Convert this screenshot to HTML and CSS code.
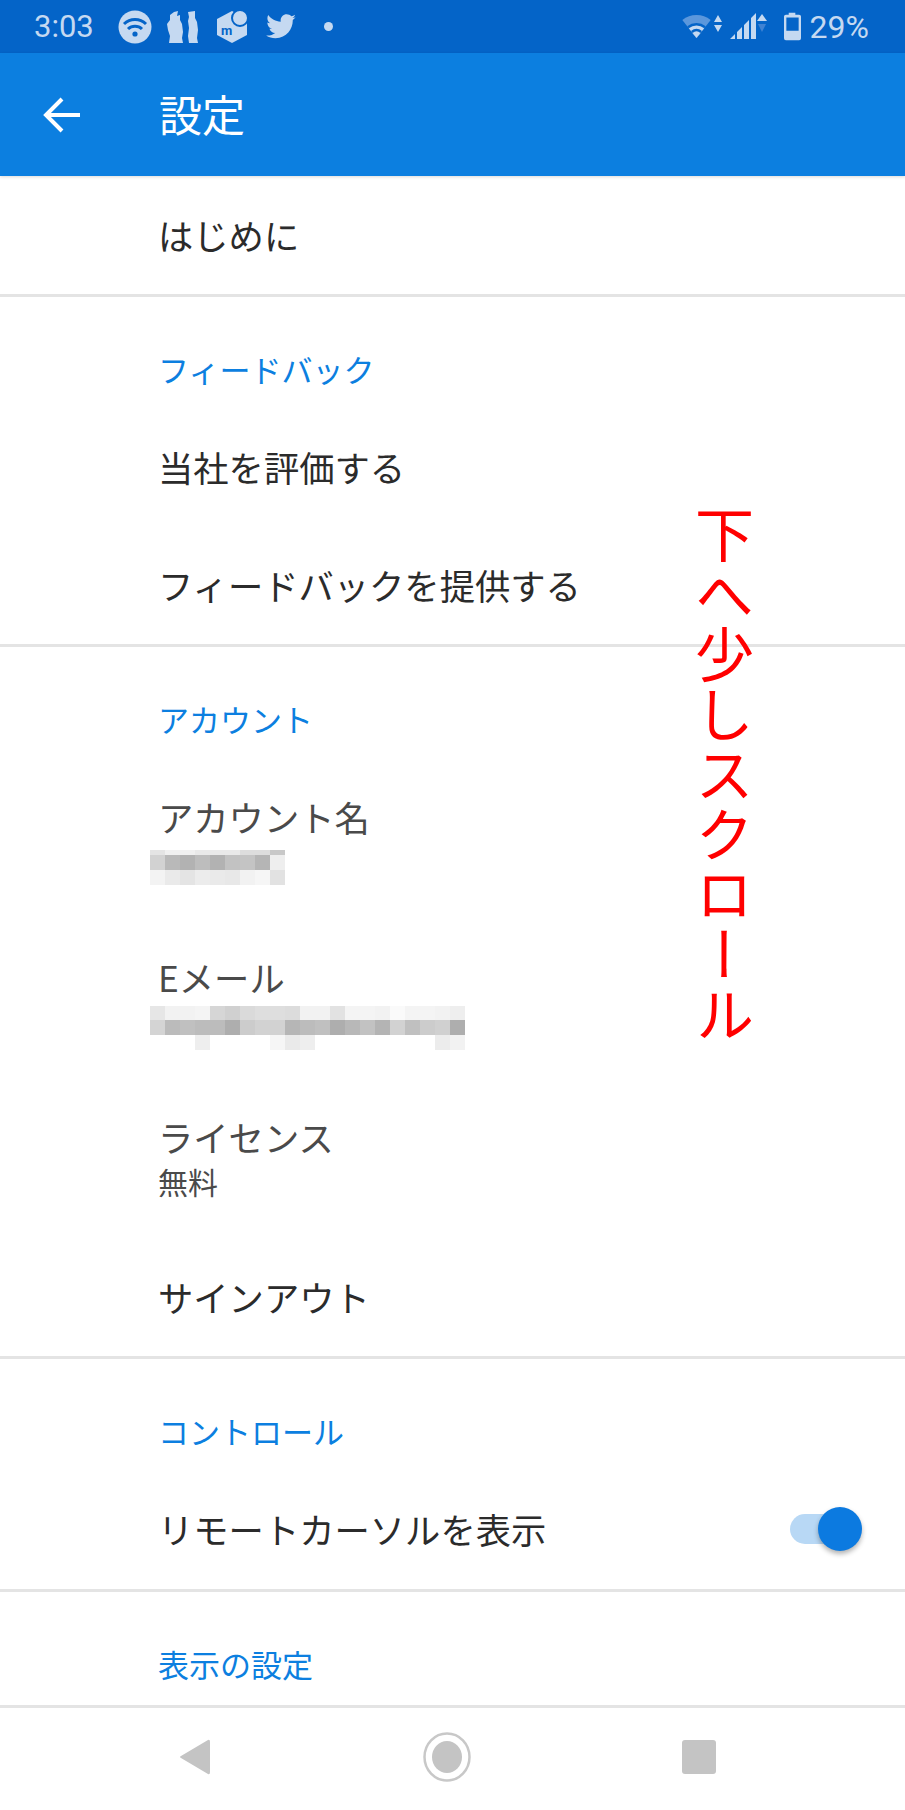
FILE: index.html
```html
<!DOCTYPE html>
<html lang="ja">
<head>
  <meta charset="UTF-8">
  <meta name="viewport" content="width=device-width, initial-scale=1.0">
  <title>設定</title>
  <link rel="stylesheet" href="styles.css">
</head>
<body>
  <div class="phone">
    <div class="status-bar">
      <span class="clock">3:03</span>
      <div class="notif-icons">
        <svg width="34" height="34" viewBox="0 0 34 34">
          <circle cx="17" cy="17" r="16.5" fill="#c5d9f1"/>
          <path d="M6 14 A16 16 0 0 1 28 14 M10 19 A10 10 0 0 1 24 19" fill="none" stroke="#0464c8" stroke-width="3"/>
          <circle cx="17" cy="24" r="2.6" fill="#0464c8"/>
        </svg>
        <svg class="ico-bottles" width="31" height="34" viewBox="0 0 31 34">
          <path d="M3 5 L7 2 L11 1 L10 6 L13 5 L13 10 L15 14 L16 22 L15 28 L16 33 L2 33 L3 26 L1 20 L0 14 L3 10 Z" fill="#c5d9f1"/>
          <path d="M21 2 L28 1 L28 8 L30 12 L31 20 L30 28 L31 33 L22 33 L21 26 L22 18 L21 11 L22 7 Z" fill="#c5d9f1"/>
        </svg>
        <svg class="ico-merc" width="32" height="33" viewBox="0 0 32 33">
          <path d="M15 1 L30 9 L30 25 L15 33 L0 25 L0 9 Z" fill="#c5d9f1"/>
          <circle cx="23" cy="8" r="8" fill="#c5d9f1" stroke="#0464c8" stroke-width="2"/>
          <text class="mark" x="4" y="25">m</text>
        </svg>
        <svg class="ico-bird" width="30" height="26" viewBox="0 0 24 21">
          <path d="M24 2.5c-.9.4-1.8.7-2.8.8 1-.6 1.8-1.6 2.2-2.7-1 .6-2 1-3.100 1.200C19.300.900 18 .300 16.600.300c-2.700 0-4.900 2.200-4.900 4.900 0 .4 0 .8.100 1.100C7.700 6.100 4.100 4.100 1.700.900c-.4.700-.7 1.600-.7 2.500 0 1.700.9 3.200 2.200 4.100-.8 0-1.600-.2-2.200-.6v.100c0 2.400 1.700 4.400 3.900 4.800-.4.100-.8.200-1.300.2-.3 0-.6 0-.9-.1.600 2 2.400 3.400 4.600 3.400-1.700 1.300-3.800 2.100-6.100 2.100-.4 0-.8 0-1.200-.1 2.200 1.400 4.800 2.200 7.500 2.200 9.100 0 14-7.500 14-14v-.600c1-.7 1.800-1.600 2.500-2.600z" fill="#c5d9f1"/>
        </svg>
        <span class="notif-dot"></span>
      </div>
      <div class="sys-icons">
        <svg width="40" height="28" viewBox="0 0 40 28">
          <path d="M14.5 25 L0.3 6.9 A23 23 0 0 1 28.7 6.9 Z" fill="#5b97dc"/>
          <path d="M14.5 25 L5.3 13.2 A15 15 0 0 1 23.7 13.2 Z" fill="#0464c8"/>
          <path d="M14.5 25 L6.8 15.15 A12.5 12.5 0 0 1 22.2 15.15 Z" fill="#c5d9f1"/>
          <path d="M14.5 25 L9 17.9 A9 9 0 0 1 20 17.9 Z" fill="#0464c8"/>
          <path d="M14.5 25 L10.5 19.9 A6.5 6.5 0 0 1 18.5 19.9 Z" fill="#c5d9f1"/>
          <path d="M36 2 L40 9 L32 9 Z M32 12 L40 12 L36 19 Z" fill="#c5d9f1"/>
        </svg>
        <svg class="signal" width="40" height="28" viewBox="0 0 40 28">
          <path d="M1 26 L6 21 L6 26 Z M8 26 L8 19 L13 14 L13 26 Z M15 26 L15 12 L20 7 L20 26 Z M22 26 L22 5 L27 0 L27 26 Z" fill="#c5d9f1"/>
          <path d="M33 1 L38 8 L28 8 Z" fill="#c5d9f1"/>
          <path d="M29 11 L37 11 L33 19 Z" fill="#3f82d3"/>
        </svg>
        <svg class="battery" width="17" height="29" viewBox="0 0 18 29">
          <path d="M5 0 H12 V2 H16 Q18 2 18 4 V27 Q18 29 16 29 H2 Q0 29 0 27 V4 Q0 2 2 2 H5 Z" fill="#c5d9f1"/>
          <rect x="2.5" y="5" width="13" height="14" fill="#0464c8"/>
        </svg>
        <span class="pct">29%</span>
      </div>
    </div>

    <header class="app-bar">
      <svg class="back" width="40" height="36" viewBox="0 0 40 36">
        <path d="M37 18 H4 M19 2 L3 18 L19 34" fill="none" stroke="#fff" stroke-width="4"/>
      </svg>
      <h1>設定</h1>
    </header>

    <main class="settings">
      <div class="row">はじめに</div>
      <hr class="sep">

      <h2 class="sec">フィードバック</h2>
      <div class="row">当社を評価する</div>
      <div class="row">フィードバックを提供する</div>
      <hr class="sep">

      <h2 class="sec">アカウント</h2>
      <div class="row two">
        <span class="label">アカウント名</span>
        <!-- blurred account name -->
        <svg class="mosaic name-mosaic" width="135" height="35" viewBox="0 0 135 35">
          <rect x="0" y="0" width="15" height="5" fill="#e4e4e4"/>
          <rect x="15" y="0" width="30" height="5" fill="#f0f0f0"/>
          <rect x="45" y="0" width="45" height="5" fill="#e9e9e9"/>
          <rect x="90" y="0" width="30" height="5" fill="#dddddd"/>
          <rect x="120" y="0" width="15" height="5" fill="#c8c8c8"/>
          <rect x="0" y="5" width="15" height="15" fill="#d2d2d2"/>
          <rect x="15" y="5" width="15" height="15" fill="#b9b9b9"/>
          <rect x="30" y="5" width="15" height="15" fill="#b2b2b2"/>
          <rect x="45" y="5" width="15" height="15" fill="#bdbdbd"/>
          <rect x="60" y="5" width="15" height="15" fill="#b2b2b2"/>
          <rect x="75" y="5" width="15" height="15" fill="#c2c2c2"/>
          <rect x="90" y="5" width="15" height="15" fill="#c4c4c4"/>
          <rect x="105" y="5" width="15" height="15" fill="#b5b5b5"/>
          <rect x="120" y="5" width="15" height="15" fill="#eeeeee"/>
          <rect x="0" y="20" width="15" height="15" fill="#f3f3f3"/>
          <rect x="15" y="20" width="15" height="15" fill="#eaeaea"/>
          <rect x="30" y="20" width="15" height="15" fill="#e4e4e4"/>
          <rect x="45" y="20" width="15" height="15" fill="#ececec"/>
          <rect x="60" y="20" width="15" height="15" fill="#eaeaea"/>
          <rect x="75" y="20" width="15" height="15" fill="#e8e8e8"/>
          <rect x="90" y="20" width="15" height="15" fill="#f2f2f2"/>
          <rect x="105" y="20" width="15" height="15" fill="#f6f6f6"/>
          <rect x="120" y="20" width="15" height="15" fill="#e2e2e2"/>
        </svg>
      </div>
      <div class="row two">
        <span class="label">Eメール</span>
        <!-- blurred address -->
        <svg class="mosaic mail-mosaic" width="315" height="44" viewBox="0 0 315 44">
          <rect x="0" y="0" width="15" height="14" fill="#e6e6e6"/>
          <rect x="15" y="0" width="30" height="14" fill="#f2f2f2"/>
          <rect x="45" y="0" width="15" height="14" fill="#f4f4f4"/>
          <rect x="60" y="0" width="15" height="14" fill="#d6d6d6"/>
          <rect x="75" y="0" width="15" height="14" fill="#d0d0d0"/>
          <rect x="90" y="0" width="15" height="14" fill="#dadada"/>
          <rect x="105" y="0" width="30" height="14" fill="#dedede"/>
          <rect x="135" y="0" width="15" height="14" fill="#dcdcdc"/>
          <rect x="150" y="0" width="30" height="14" fill="#f2f2f2"/>
          <rect x="180" y="0" width="15" height="14" fill="#e2e2e2"/>
          <rect x="195" y="0" width="30" height="14" fill="#f4f4f4"/>
          <rect x="225" y="0" width="15" height="14" fill="#f2f2f2"/>
          <rect x="240" y="0" width="15" height="14" fill="#fafafa"/>
          <rect x="255" y="0" width="30" height="14" fill="#f4f4f4"/>
          <rect x="285" y="0" width="15" height="14" fill="#f2f2f2"/>
          <rect x="300" y="0" width="15" height="14" fill="#eeeeee"/>
          <rect x="0" y="14" width="15" height="15" fill="#d4d4d4"/>
          <rect x="15" y="14" width="15" height="15" fill="#bbbbbb"/>
          <rect x="30" y="14" width="15" height="15" fill="#c0c0c0"/>
          <rect x="45" y="14" width="30" height="15" fill="#bcbcbc"/>
          <rect x="75" y="14" width="15" height="15" fill="#aeaeae"/>
          <rect x="90" y="14" width="15" height="15" fill="#cccccc"/>
          <rect x="105" y="14" width="30" height="15" fill="#d2d2d2"/>
          <rect x="135" y="14" width="15" height="15" fill="#b6b6b6"/>
          <rect x="150" y="14" width="15" height="15" fill="#bcbcbc"/>
          <rect x="165" y="14" width="15" height="15" fill="#c0c0c0"/>
          <rect x="180" y="14" width="15" height="15" fill="#aeaeae"/>
          <rect x="195" y="14" width="15" height="15" fill="#b8b8b8"/>
          <rect x="210" y="14" width="15" height="15" fill="#c2c2c2"/>
          <rect x="225" y="14" width="15" height="15" fill="#b4b4b4"/>
          <rect x="240" y="14" width="15" height="15" fill="#d2d2d2"/>
          <rect x="255" y="14" width="15" height="15" fill="#c0c0c0"/>
          <rect x="270" y="14" width="15" height="15" fill="#cccccc"/>
          <rect x="285" y="14" width="15" height="15" fill="#d0d0d0"/>
          <rect x="300" y="14" width="15" height="15" fill="#aeaeae"/>
          <rect x="45" y="29" width="15" height="15" fill="#eeeeee"/>
          <rect x="120" y="29" width="15" height="15" fill="#f6f6f6"/>
          <rect x="135" y="29" width="15" height="15" fill="#eaeaea"/>
          <rect x="150" y="29" width="15" height="15" fill="#eeeeee"/>
          <rect x="285" y="29" width="15" height="15" fill="#ececec"/>
          <rect x="300" y="29" width="15" height="15" fill="#f2f2f2"/>
        </svg>
      </div>
      <div class="row two">
        <span class="label">ライセンス</span>
        <span class="sub">無料</span>
      </div>
      <div class="row">サインアウト</div>
      <hr class="sep">

      <h2 class="sec">コントロール</h2>
      <div class="row switch-row">
        <span>リモートカーソルを表示</span>
        <span class="switch"><span class="track"></span><span class="thumb"></span></span>
      </div>
      <hr class="sep">

      <h2 class="sec">表示の設定</h2>
    </main>

    <div class="note">下へ少しスクロール</div>

    <nav class="nav-bar">
      <svg width="32" height="36" viewBox="0 0 32 36">
        <path d="M29 1 Q31 0 31 3 V33 Q31 36 29 35 L2 19 Q0 18 2 17 Z" fill="#c4c4c4"/>
      </svg>
      <svg width="48" height="50" viewBox="0 0 48 50">
        <ellipse cx="24" cy="25" rx="22.5" ry="23.5" fill="none" stroke="#c8c8c8" stroke-width="2.5"/>
        <ellipse cx="24" cy="25" rx="15" ry="16" fill="#c4c4c4"/>
      </svg>
      <svg width="34" height="34" viewBox="0 0 34 34">
        <rect width="34" height="34" rx="3" fill="#c4c4c4"/>
      </svg>
    </nav>
  </div>
</body>
</html>
```

FILE: styles.css
```css
* {
  box-sizing: border-box;
}

body {
  margin: 0;
  background-color: #ffffff;
  font-family: "Noto Sans CJK JP", "Noto Sans", sans-serif;
}

.phone {
  position: relative;
  width: 905px;
  height: 1810px;
  display: flex;
  flex-direction: column;
  overflow: hidden;
}

.status-bar {
  height: 53px;
  flex: none;
  display: flex;
  align-items: center;
  background-color: #0464c8;
  color: #c5d9f1;
  padding: 0 36px 0 34px;
}

.clock {
  font-family: Roboto, sans-serif;
  font-size: 31px;
  width: 84px;
}

.notif-icons {
  display: flex;
  align-items: center;
}

.ico-bottles {
  margin-left: 15px;
}

.ico-merc {
  margin-left: 19px;
}

.ico-bird {
  margin-left: 17px;
}

.mark {
  font-family: Roboto, sans-serif;
  font-size: 13px;
  font-weight: 700;
  fill: #0464c8;
}

.notif-dot {
  width: 9px;
  height: 9px;
  margin-left: 28px;
  border-radius: 50%;
  background-color: #c5d9f1;
}

.sys-icons {
  margin-left: auto;
  display: flex;
  align-items: center;
}

.signal {
  margin-left: 7px;
}

.battery {
  margin-left: 15px;
}

.pct {
  font-family: Roboto, sans-serif;
  font-size: 32px;
  margin-left: 9px;
}

.app-bar {
  height: 123px;
  flex: none;
  display: flex;
  align-items: center;
  background-color: #0c7fe0;
  padding-left: 43px;
  box-shadow: 0 1px 3px rgba(0, 0, 0, 0.15);
  position: relative;
}

.app-bar h1 {
  margin: 0 0 0 76px;
  padding-bottom: 4px;
  font-size: 43px;
  font-weight: 400;
  color: #ffffff;
}

.settings {
  flex: 1;
  overflow: hidden;
}

.row {
  height: 118px;
  padding: 0 0 2px 158px;
  display: flex;
  align-items: center;
  font-size: 35.3px;
  color: #2b2b2b;
}

.row.two {
  height: 160px;
  flex-direction: column;
  align-items: flex-start;
  justify-content: flex-start;
  padding: 34px 0 0 158px;
  color: #4a4a4a;
}

.label {
  line-height: 50px;
}

.sub {
  font-size: 30px;
  line-height: 38px;
}

.mosaic {
  display: block;
  margin-left: -8px;
}

.name-mosaic {
  margin-top: 8px;
}

.mail-mosaic {
  margin-top: 4px;
}

.sep {
  height: 3px;
  margin: 0;
  border: 0;
  background-color: #e4e4e4;
}

.sec {
  height: 111px;
  margin: 0;
  padding: 48px 0 0 158px;
  font-size: 31px;
  line-height: 48px;
  font-weight: 400;
  color: #0c7fe0;
}

.switch-row {
  height: 119px;
  justify-content: space-between;
  padding-right: 43px;
}

.switch {
  position: relative;
  width: 72px;
  height: 44px;
}

.track {
  position: absolute;
  left: 0;
  top: 7px;
  width: 60px;
  height: 30px;
  border-radius: 15px;
  background-color: #b8d8f5;
}

.thumb {
  position: absolute;
  right: 0;
  top: 0;
  width: 44px;
  height: 44px;
  border-radius: 50%;
  background-color: #0c7ae0;
  box-shadow: 0 3px 5px rgba(0, 0, 0, 0.3);
}

.note {
  position: absolute;
  right: 151px;
  top: 505px;
  writing-mode: vertical-rl;
  font-size: 59px;
  letter-spacing: 1px;
  line-height: 1;
  color: #ff0000;
}

.nav-bar {
  position: absolute;
  left: 0;
  right: 0;
  bottom: 0;
  height: 105px;
  border-top: 3px solid #e4e4e4;
  background-color: #ffffff;
  display: flex;
  align-items: center;
  justify-content: space-between;
  padding: 0 189px 4px 179px;
}
```
